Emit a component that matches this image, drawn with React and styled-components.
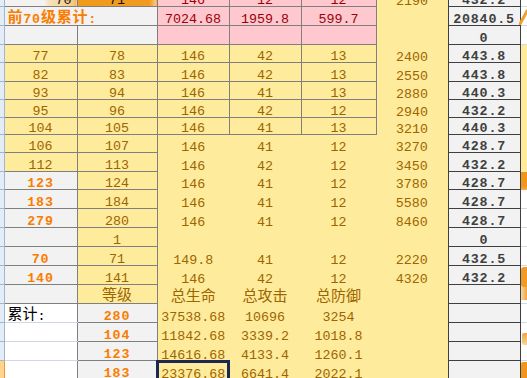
import React from 'react';
import styled, { createGlobalStyle, css } from 'styled-components';

const Global = createGlobalStyle`
  html, body { margin: 0; padding: 0; background: #fff; }
  body { overflow: hidden; }
`;

const Sheet = styled.div`
  position: relative;
  width: 527px;
  height: 378px;
  overflow: hidden;
  background: #fff;
  font-family: "Liberation Mono", "Noto Sans CJK SC", monospace;
  font-size: 13.33px;
`;

const Grid = styled.table`
  border-collapse: collapse;
  table-layout: fixed;
  width: 560px;
  margin-top: -13px;
`;

const Col = styled.col`
  width: ${p => p.$w}px;
`;

const Row = styled.tr`
  height: ${p => p.$h}px;
`;

const RowHead = styled.td`
  padding: 0;
  background: ${p => (p.$active ? '#FFD58D' : '#E4ECF7')};
  border-right: 1px solid ${p => (p.$active ? '#F29436' : '#9EB6CE')};
  border-bottom: 1px solid #9EB6CE;
`;

const kinds = {
  n: css`background: #FFEB9C; color: #9C6500;`,
  b: css`background: #FFC7CE; color: #9C0006;`,
  c: css`background: #F2F2F2; color: #FA7D00; font-weight: bold; letter-spacing: 0.8px;`,
  o: css`background: #F2F2F2; color: #3F3F3F; font-weight: bold; letter-spacing: 0.8px;`,
  w: css`background: #fff; color: #000;`,
  pa: css`
    background: linear-gradient(to right, #F2F2F2 0 40px, #F7E2BE 44px, #F4C77E 70px, #F1A53A);
    color: #111;
  `,
  pb: css`
    background: linear-gradient(to right, #F19B1C 0 72px, #F6C680 78px);
    color: #111;
  `,
  pc: css`
    background: linear-gradient(to bottom, #F0961E 0 14px, #F6B45A 19px);
  `,
};

const edgeCss = p => {
  if (p.$edge === 'all') {
    const col = p.$kind === 'o' ? '#3F3F3F' : '#7F7F7F';
    return css`border: 1px solid ${col};`;
  }
  if (p.$edge === 'grid') return css`border-bottom: 1px solid #D0D7E5;`;
  return css`border: none;`;
};

const Cell = styled.td`
  padding: 0 ${p => (p.$align === 'right' ? '5px' : '3px')} 0 3px;
  vertical-align: bottom;
  line-height: 11px;
  white-space: nowrap;
  overflow: hidden;
  text-align: ${p => p.$align || 'center'};
  ${p => kinds[p.$kind]}
  ${edgeCss}
  ${p => p.$sel && css`
    outline: 3px solid #1B2852;
    outline-offset: -2px;
  `}
`;

const Han = styled.span`
  font-family: "Noto Sans CJK SC", sans-serif;
  font-size: 15px;
  vertical-align: 1px;
  letter-spacing: inherit;
`;

const Blot = styled.div`
  position: absolute;
  left: ${p => p.$x}px;
  top: ${p => p.$y}px;
  width: ${p => p.$w}px;
  height: ${p => p.$h}px;
  background: ${p => p.$bg};
  border-radius: ${p => p.$r || '0'};
`;

const Stroke = styled.svg`
  position: absolute;
  left: 519px;
  top: 8px;
`;

const n = (t = '') => ({ k: 'n', t, e: 'all' });
const f = (t = '') => ({ k: 'n', t, e: 'none' });
const b = (t = '') => ({ k: 'b', t, e: 'all' });
const c = (t = '') => ({ k: 'c', t, e: 'all' });
const o = (t = '') => ({ k: 'o', t, e: 'all' });
const w = (t = '', align) => ({ k: 'w', t, e: 'grid', align });

const rows = [
  { h: 19, cells: [{ k: 'pa', t: '70', e: 'all', align: 'right' }, { k: 'pb', t: '71', e: 'all' }, b('146'), b('12'), b('12'), f('2190'), o('432.2'), w()] },
  { h: 19, cells: [{ k: 'c', e: 'all', span: 2, align: 'left', t: <><Han>前</Han>70<Han>级累计</Han>:</> }, b('7024.68'), b('1959.8'), b('599.7'), f(), o('20840.5'), w()] },
  { h: 19, cells: [c(), c(), b(), b(), b(), f(), o('0'), w()] },
  { h: 18, cells: [n('77'), n('78'), n('146'), n('42'), n('13'), f('2400'), o('443.8'), f()] },
  { h: 19, cells: [n('82'), n('83'), n('146'), n('42'), n('13'), f('2550'), o('443.8'), f()] },
  { h: 18, cells: [n('93'), n('94'), n('146'), n('41'), n('13'), f('2880'), o('440.3'), f()] },
  { h: 18, cells: [n('95'), n('96'), n('146'), n('42'), n('12'), f('2940'), o('432.2'), f()] },
  { h: 17, cells: [n('104'), n('105'), n('146'), n('41'), n('13'), f('3210'), o('440.3'), f()] },
  { h: 18, cells: [n('106'), n('107'), f('146'), f('41'), f('12'), f('3270'), o('428.7'), f()] },
  { h: 19, cells: [n('112'), n('113'), f('146'), f('42'), f('12'), f('3450'), o('432.2'), f()] },
  { h: 18, cells: [c('123'), n('124'), f('146'), f('41'), f('12'), f('3780'), o('428.7'), { k: 'pc', t: '', e: 'none' }] },
  { h: 19, cells: [c('183'), n('184'), f('146'), f('41'), f('12'), f('5580'), o('428.7'), w()] },
  { h: 19, cells: [c('279'), n('280'), f('146'), f('41'), f('12'), f('8460'), o('428.7'), w()] },
  { h: 19, cells: [c(), n('1'), f(), f(), f(), f(), o('0'), w()] },
  { h: 19, cells: [c('70'), n('71'), f('149.8'), f('41'), f('12'), f('2220'), o('432.5'), w()] },
  { h: 19, cells: [c('140'), n('141'), f('146'), f('42'), f('12'), f('4320'), o('432.2'), w()] },
  { h: 19, cells: [c(), n(<Han>等级</Han>), f(<Han>总生命</Han>), f(<Han>总攻击</Han>), f(<Han>总防御</Han>), f(), o(), w()] },
  { h: 19, cells: [w(<><Han>累计</Han>:</>, 'left'), c('280'), f('37538.68'), f('10696'), f('3254'), f(), o(), w()] },
  { h: 19, cells: [w(), c('104'), f('11842.68'), f('3339.2'), f('1018.8'), f(), o(), w()] },
  { h: 19, cells: [w(), c('123'), f('14616.68'), f('4133.4'), f('1260.1'), f(), o(), w()] },
  { h: 19, active: true, cells: [w(), c('183'), { ...f('23376.68'), sel: true }, f('6641.4'), f('2022.1'), f(), o(), w()] },
];

const widths = [4, 73, 80, 72, 72, 75, 72, 72, 40];

export default function App() {
  return (
    <Sheet>
      <Global />
      <Grid>
        <colgroup>
          {widths.map((wd, i) => <Col key={i} $w={wd} />)}
        </colgroup>
        <tbody>
          {rows.map((r, ri) => (
            <Row key={ri} $h={r.h}>
              <RowHead $active={r.active} />
              {r.cells.map((cl, ci) => (
                <Cell
                  key={ci}
                  colSpan={cl.span || 1}
                  $kind={cl.k}
                  $edge={cl.e}
                  $align={cl.align}
                  $sel={cl.sel}
                >
                  {cl.t}
                </Cell>
              ))}
            </Row>
          ))}
        </tbody>
      </Grid>
      <Stroke width="9" height="17" viewBox="0 0 9 17">
        <path d="M1 16 L8 3" stroke="#F0A02E" strokeWidth="3" strokeLinecap="round" fill="none" />
      </Stroke>
      <Blot $x={521} $y={267} $w={6} $h={20} $bg="#F09A28" $r="3px 0 0 2px" />
      <Blot $x={521} $y={287} $w={6} $h={13} $bg="linear-gradient(to right, #F6D9A8, #F0A540)" />
      <Blot $x={522} $y={333} $w={5} $h={12} $bg="linear-gradient(to bottom, #F2A53C, #F7D7A0)" $r="2px 0 0 2px" />
      <Blot $x={521} $y={362} $w={6} $h={16} $bg="#F0961E" $r="2px 0 0 0" />
    </Sheet>
  );
}
